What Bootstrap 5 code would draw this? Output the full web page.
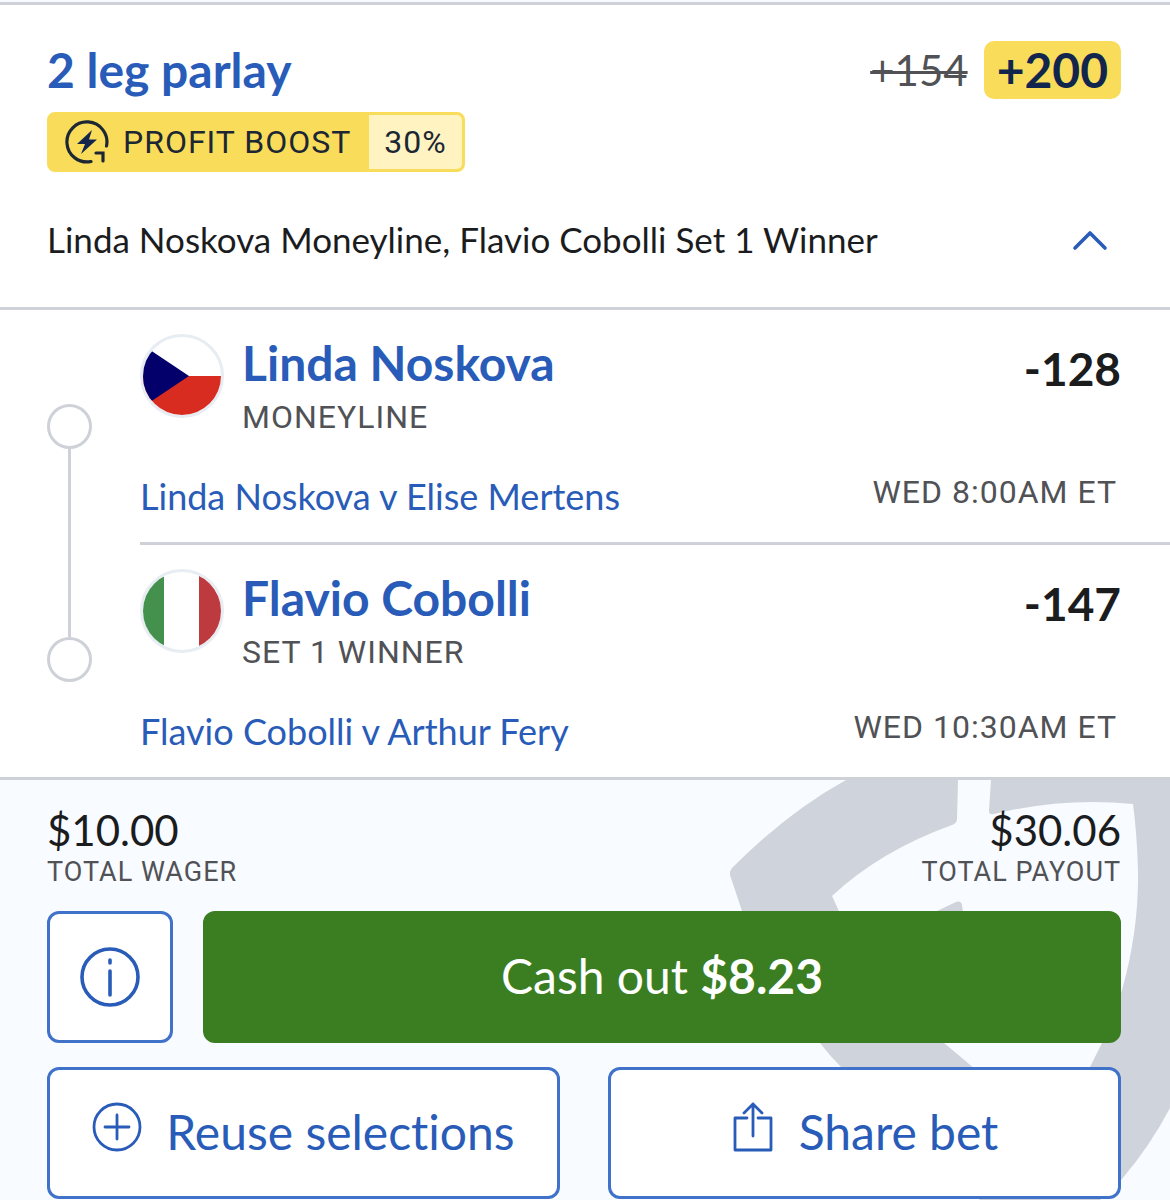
<!DOCTYPE html>
<html lang="en">
<head>
<meta charset="utf-8">
<meta name="viewport" content="width=device-width, initial-scale=1">
<title>2 leg parlay</title>
<link href="https://cdn.jsdelivr.net/npm/bootstrap@5.3.0/dist/css/bootstrap.min.css" rel="stylesheet">
<style>
  :root { --blue: #285cb8; --line: #cfd1d8; --ink: #1b1c1e; --grey: #505256; --yellow: #f9dc5a; }
  body { font-family: Lato, sans-serif; color: var(--ink); background: #f8fbff; }
  body, .btn { font-variant-ligatures: none; }
  a { color: var(--blue); text-decoration: none; }
  .slip-head { background: #fff; border-top: 3px solid var(--line); border-bottom: 3px solid var(--line); margin-top: 2px; padding: 36px 49px 38px 47px; }
  .slip-title { font-size: 48px; line-height: 58px; font-weight: 700; color: var(--blue); }
  .old-odds { font-size: 42px; line-height: 58px; color: var(--grey); text-decoration-thickness: 3px; }
  .new-odds { font-size: 48px; line-height: 58px; font-weight: 700; color: #12264d; background: var(--yellow); border-radius: 10px; padding: 0 13px; }
  .caps { font-family: Roboto, sans-serif; font-size: 32px; letter-spacing: 1px; color: var(--grey); text-transform: uppercase; white-space: nowrap; }
  .boost { background: var(--yellow); border: 3px solid var(--yellow); border-radius: 8px; height: 60px; margin-top: 13px; line-height: 54px; color: #1c2733; }
  .boost-name { padding: 0 18px 0 15px; gap: 14px; }
  .boost-rate { background: #fef3c1; border-radius: 0 5px 5px 0; padding: 0 15px; }
  .summary-row { margin-top: 38px; }
  .summary-text { font-size: 35px; line-height: 59px; }
  .btn-plain { border: 0; background: none; padding: 0 13px; line-height: 1; }
  .legs { background: #fff; border-bottom: 3px solid var(--line); padding-left: 47px; }
  .track { width: 45px; padding: 94px 0 95px; margin-right: 48px; }
  .stop { width: 45px; height: 45px; border: 3px solid var(--line); border-radius: 50%; }
  .rail { width: 3px; background: var(--line); }
  .leg { padding: 24px 49px 23px 0; }
  .leg + .leg { border-top: 3px solid var(--line); }
  .flag { width: 84px; height: 84px; margin-right: 18px; }
  .pick { font-size: 48px; line-height: 58px; font-weight: 700; }
  .market { line-height: 50px; }
  .odds { font-size: 46px; line-height: 70px; font-weight: 700; }
  .fixture-row { margin-top: 31px; }
  .fixture { font-size: 36px; line-height: 46px; }
  .kickoff { line-height: 38px; padding-right: 4px; }
  .slip-foot { overflow: hidden; padding: 28px 49px 1px 47px; }
  .crest { position: absolute; top: 0; right: 0; width: 440px; height: 420px; }
  .sum { font-size: 42px; line-height: 44px; }
  .sum-label { font-size: 27px; line-height: 40px; }
  .actions { margin-top: 19px; gap: 24px; }
  .act { height: 132px; font-size: 48px; border: 3px solid #3f72c8; border-radius: 12px; background: #fff; color: var(--blue); padding: 0 0 2px; }
  .act:hover { background: #eef4ff; color: var(--blue); border-color: #3f72c8; }
  .act-info { width: 126px; margin-right: 30px; padding: 0; }
  .act-cash, .act-cash:hover { background: #3b7e22; border-color: #3b7e22; color: #fff; }
  .act-pair { gap: 48px; }
  .act-pair .act { flex: 1 1 0; }
  .act-icon { margin-bottom: 10px; }
</style>
<script src="https://cdn.jsdelivr.net/npm/bootstrap@5.3.0/dist/js/bootstrap.bundle.min.js"></script>
</head>
<body>
<main class="d-flow-root">
  <header class="slip-head">
    <div class="d-flex justify-content-between align-items-start">
      <h1 class="slip-title m-0">2 leg parlay</h1>
      <div class="d-flex align-items-start">
        <s class="old-odds me-3">+154</s>
        <span class="new-odds">+200</span>
      </div>
    </div>
    <div class="boost caps d-inline-flex align-top">
      <span class="boost-name d-flex align-items-center">
        <svg width="44" height="44" viewBox="0 0 44 44" fill="none" stroke="#1c2733" stroke-width="3.2" stroke-linecap="round" aria-hidden="true">
          <path d="M41.500 26A20 20 0 1 0 26 41.500"/>
          <path d="M31 33h7v8"/>
          <path d="M27 10 12 24h8l-4 10L32 19.500h-8z" fill="#12264d" stroke="none"/>
        </svg>
        <span>Profit boost</span>
      </span>
      <span class="boost-rate">30%</span>
    </div>
    <div class="summary-row d-flex justify-content-between align-items-center">
      <span class="summary-text">Linda Noskova Moneyline, Flavio Cobolli Set 1 Winner</span>
      <button type="button" class="btn btn-plain" aria-label="Collapse selections" aria-expanded="true">
        <svg width="36" height="22" viewBox="0 0 36 22" fill="none" stroke="#285cb8" stroke-width="3.600" stroke-linecap="round" stroke-linejoin="round"><path d="M3 19 18 4l15 15"/></svg>
      </button>
    </div>
  </header>

  <section class="legs d-flex">
    <div class="track d-flex flex-column align-items-center flex-shrink-0">
      <span class="stop"></span><span class="rail flex-grow-1"></span><span class="stop"></span>
    </div>
    <div class="flex-grow-1">
      <article class="leg">
        <div class="d-flex align-items-start">
          <svg class="flag" viewBox="0 0 84 84" role="img" aria-label="Czech Republic">
            <clipPath id="cz"><circle cx="42" cy="42" r="39"/></clipPath>
            <circle cx="42" cy="42" r="40.500" fill="#fff" stroke="#e8edf3" stroke-width="3"/>
            <g clip-path="url(#cz)"><path d="M0 42h84v42H0z" fill="#d72c1f"/><path d="M-8 4 49 42-8 80z" fill="#03006b"/></g>
          </svg>
          <div class="flex-grow-1">
            <a href="#" class="pick d-block">Linda Noskova</a>
            <div class="market caps">Moneyline</div>
          </div>
          <span class="odds">-128</span>
        </div>
        <div class="fixture-row d-flex justify-content-between align-items-start">
          <a href="#" class="fixture">Linda Noskova v Elise Mertens</a>
          <span class="kickoff caps">Wed 8:00AM ET</span>
        </div>
      </article>
      <article class="leg">
        <div class="d-flex align-items-start">
          <svg class="flag" viewBox="0 0 84 84" role="img" aria-label="Italy">
            <clipPath id="it"><circle cx="42" cy="42" r="39"/></clipPath>
            <circle cx="42" cy="42" r="40.500" fill="#fff" stroke="#e8edf3" stroke-width="3"/>
            <g clip-path="url(#it)"><path d="M0 0h24v84H0z" fill="#43914d"/><path d="M59 0h25v84H59z" fill="#bd3a3e"/></g>
          </svg>
          <div class="flex-grow-1">
            <a href="#" class="pick d-block">Flavio Cobolli</a>
            <div class="market caps">Set 1 winner</div>
          </div>
          <span class="odds">-147</span>
        </div>
        <div class="fixture-row d-flex justify-content-between align-items-start">
          <a href="#" class="fixture">Flavio Cobolli v Arthur Fery</a>
          <span class="kickoff caps">Wed 10:30AM ET</span>
        </div>
      </article>
    </div>
  </section>

  <footer class="slip-foot position-relative">
    <svg class="crest" viewBox="0 0 440 420" fill="#cfd3db" aria-hidden="true">
      <path d="M116 0H228L227 39Q227 43 222 45Q150 71 102 116Q140 204 214 263Q262 302 300 342Q338 312 360 287L372 263Q384 236 392 210Q409 150 408 90Q407 54 403 24Q334 17 264 34Q259 35 259 31L261 0H440V328Q420 366 392 399L370 420H250Q170 366 111 287Q100 276 90 263Q40 202 12 131L0 95Q-1 91 3 87Q58 32 116 0Z"/>
      <path d="M207 131 226 122Q231 120 232 125L234 140H200Z"/>
    </svg>
    <div class="position-relative">
      <div class="d-flex justify-content-between">
        <div>
          <div class="sum">$10.00</div>
          <div class="sum-label caps">Total wager</div>
        </div>
        <div class="text-end">
          <div class="sum">$30.06</div>
          <div class="sum-label caps">Total payout</div>
        </div>
      </div>
      <div class="actions d-flex flex-column">
        <div class="d-flex">
          <button type="button" class="btn act act-info flex-shrink-0 d-flex align-items-center justify-content-center" aria-label="Cash out information">
            <svg width="60" height="60" viewBox="0 0 60 60" fill="none" stroke="#285cb8" stroke-width="3.600" stroke-linecap="round"><circle cx="30" cy="30" r="28"/><path d="M30 13v3M30 24v24"/></svg>
          </button>
          <button type="button" class="btn act act-cash flex-grow-1">Cash out <b>$8.23</b></button>
        </div>
        <div class="act-pair d-flex">
          <button type="button" class="btn act d-flex align-items-center justify-content-center gap-4">
            <svg class="act-icon" width="50" height="50" viewBox="0 0 50 50" fill="none" stroke="#285cb8" stroke-width="2.800" stroke-linecap="round" aria-hidden="true"><circle cx="25" cy="25" r="23"/><path d="M25 13v24M13 25h24"/></svg>
            Reuse selections
          </button>
          <button type="button" class="btn act d-flex align-items-center justify-content-center gap-4">
            <svg class="act-icon" width="44" height="50" viewBox="0 0 44 50" fill="none" stroke="#285cb8" stroke-width="2.800" stroke-linecap="round" stroke-linejoin="round" aria-hidden="true"><path d="M16 16H4v32h36V16H27M22 34V2M13 11l9-9 9 9"/></svg>
            Share bet
          </button>
        </div>
      </div>
    </div>
  </footer>
</main>
</body>
</html>
